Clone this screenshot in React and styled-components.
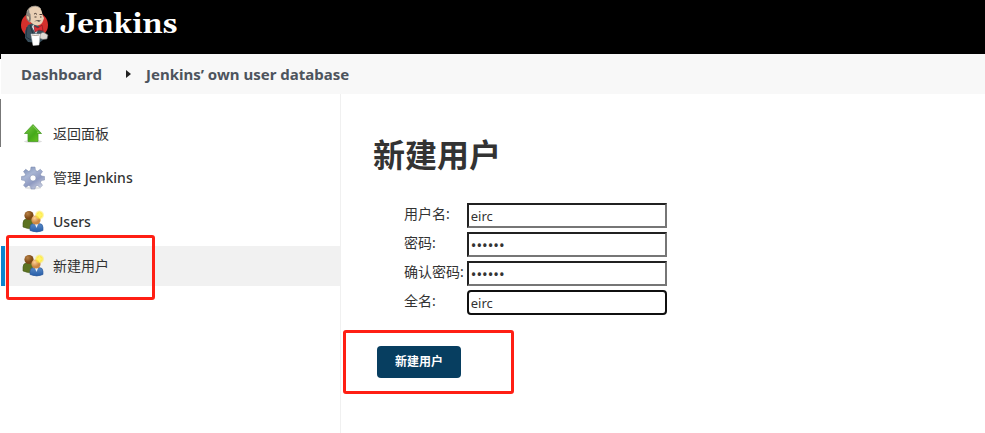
import React from "react";
import styled, { createGlobalStyle } from "styled-components";

const GlobalStyle = createGlobalStyle`
  * { box-sizing: border-box; }
  body {
    margin: 0;
    background: #fff;
    color: #333;
    font-family: "Noto Sans", "Noto Sans CJK SC", sans-serif;
    font-size: 14px;
    line-height: 20px;
  }
`;

const Page = styled.div`
  position: relative;
  display: flex;
  flex-direction: column;
  min-height: 100vh;
  overflow: hidden;
`;

const EdgeMark = styled.span`
  position: absolute;
  left: 0;
  top: ${(p) => p.$top}px;
  width: 1px;
  height: ${(p) => p.$height}px;
  background: ${(p) => p.$color};
`;

const Header = styled.header`
  display: flex;
  align-items: center;
  height: 54px;
  padding: 0 20px;
  background: #000;
`;

const Brand = styled.a`
  display: flex;
  align-items: center;
  gap: 10px;
  padding-bottom: 4px;
  color: #fff;
  font: bold 29px/40px Gelasio, Georgia, "DejaVu Serif", serif;
  text-decoration: none;
`;

const Breadcrumbs = styled.nav`
  display: flex;
  align-items: center;
  height: 40px;
  margin-left: 1px;
  padding: 0 20px;
  background: #f8f8f8;
`;

const Crumb = styled.a`
  color: #4d545d;
  font-size: 15px;
  font-weight: 700;
  text-decoration: none;
  white-space: nowrap;
`;

const Separator = styled.svg`
  width: 5px;
  height: 8px;
  margin: 0 15px 0 24px;
`;

const Body = styled.div`
  display: flex;
  flex: 1;
`;

const SidePanel = styled.aside`
  flex: 0 0 341px;
  padding: 20px 0 0 1px;
  border-right: 1px solid #f0f0f0;
`;

const Tasks = styled.nav`
  display: flex;
  flex-direction: column;
  gap: 4px;
`;

const Task = styled.a`
  position: relative;
  display: flex;
  align-items: center;
  gap: 8px;
  height: 40px;
  padding-left: 16px;
  border-left: 4px solid ${(p) => (p.$active ? "#0b85cf" : "transparent")};
  background: ${(p) => (p.$active ? "#f1f1f1" : "transparent")};
  color: #333;
  text-decoration: none;

  svg { flex: none; }
`;

const TaskLabel = styled.span`
  line-height: 20px;
`;

const Latin = styled.span`
  font-weight: 500;
`;

const Outline = styled.span`
  position: absolute;
  top: ${(p) => p.$top}px;
  left: ${(p) => p.$left}px;
  width: ${(p) => p.$width}px;
  height: ${(p) => p.$height}px;
  border: 3px solid #ff1f14;
  border-radius: 3px;
  pointer-events: none;
`;

const Main = styled.main`
  flex: 1;
  padding: 40px 32px;
`;

const Title = styled.h1`
  margin: 0;
  font-size: 32px;
  font-weight: 700;
  line-height: 42px;
`;

const Form = styled.form`
  margin-top: 25px;
`;

const Fields = styled.div`
  display: grid;
  grid-template-columns: max-content 200px;
  gap: 4px 3px;
  padding: 2px 0 0 31px;
`;

const FieldLabel = styled.label`
  line-height: 22px;
`;

const Input = styled.input`
  width: 100%;
  height: 25px;
  padding: 1px 2px;
  border: 2px inset #767676;
  border-radius: 0;
  background: #fff;
  color: #333;
  font: inherit;
  font-size: ${(p) => (p.type === "password" ? 15 : 13)}px;
  outline: none;

  ${(p) => p.$focused && "border: 2px solid #101010; border-radius: 4px;"}
`;

const Actions = styled.div`
  position: relative;
  width: max-content;
  margin: 31px 0 0 4px;
`;

const Submit = styled.button`
  height: 32px;
  padding: 0 18px;
  border: 0;
  border-radius: 4px;
  background: #073e60;
  color: #fff;
  font: bold 12px/20px "Noto Sans", "Noto Sans CJK SC", sans-serif;
`;

const Mascot = () => (
  <svg width="30" height="44" viewBox="0 0 30 44" aria-hidden="true">
    <ellipse cx="14.500" cy="22" rx="13.500" ry="13" fill="#d5302c" />
    <path d="M5 28 8 22 13 20 20 24 24 29 23 37 19 40 8 39 5 35Z" fill="#3a4f5c" />
    <path d="M7 24 6 34 11 37M10 22l3 9" fill="none" stroke="#1f323e" strokeWidth=".9" />
    <path d="M7 13C6 6 10 3 15 3C20 3 22 7 22.500 12L24 15 23 18C22 22 17 24 13 21L9 18Z" fill="#e9d0b5" />
    <path d="M9 5.500C6 8 5.500 13 7 17L10 20 11 16 10.500 11 9.500 10Z" fill="#8a857f" />
    <path d="M7 15C5 13 8 11.500 9.500 14v4" fill="#e4c7a8" stroke="#77604f" strokeWidth=".6" />
    <path d="M7 9C9 3 17 1 21 6" fill="none" stroke="#9d958b" strokeWidth=".9" />
    <path d="M14 11q2-1.500 3 .5M19.500 11.500h2.500M14.500 14h2M20 14h1.500" fill="none" stroke="#4b3c35" strokeWidth="1" />
    <path d="M14 18.500q3-2.500 7-1l-2 1.500-2-1Z" fill="#5b5550" />
    <path d="M13 21.500 18 27 16 31 12 24Z" fill="#e9edf0" />
    <path d="M14 23 18 25 22 22 23 28 19 27 15 29Z" fill="#e02c35" stroke="#801c25" strokeWidth=".7" />
    <path d="M20 31Q23 28 25 30l3 2-1 4-4 .5-3-1Z" fill="#ddd9d3" stroke="#5a6063" strokeWidth=".6" />
    <path d="M11 31h9l-1 11-6 .500Z" fill="#fff" stroke="#c9c9c9" strokeWidth=".5" />
    <path d="M12 32q3 1 7 0" fill="none" stroke="#897567" strokeWidth=".7" />
  </svg>
);

const UpIcon = () => (
  <svg width="24" height="24" viewBox="0 0 24 24" aria-hidden="true">
    <defs>
      <linearGradient id="green" x2="1" y2="1">
        <stop stopColor="#80cd49" />
        <stop offset=".55" stopColor="#45a91a" />
        <stop offset="1" stopColor="#70ca20" />
      </linearGradient>
    </defs>
    <ellipse cx="12" cy="19.500" rx="9" ry="1.500" fill="#ddd" />
    <path d="M12 2.500 20.500 11.500H17v8H7v-8H3.500Z" fill="url(#green)" stroke="#4b9d29" strokeWidth=".8" strokeLinejoin="round" />
    <path d="M12 4 18 10.500H16" fill="none" stroke="#a5df79" strokeWidth=".6" />
  </svg>
);

const GearIcon = () => (
  <svg width="24" height="24" viewBox="0 0 24 24" aria-hidden="true">
    <defs>
      <linearGradient id="steel" x2=".7" y2="1">
        <stop stopColor="#7287b0" />
        <stop offset=".4" stopColor="#a9b6d4" />
        <stop offset=".7" stopColor="#8f9ac1" />
        <stop offset="1" stopColor="#c9cee0" />
      </linearGradient>
    </defs>
    <ellipse cx="12" cy="22" rx="8" ry="1.500" fill="#e6e6e6" />
    <path
      fillRule="evenodd"
      d="M10 1h4l.5 3.500 2 .8 2.800-2 2.200 2.200-2 2.800.8 1.700 3.200.5v3.500l-3.200.5-.8 2 2 2.700-2.200 2.300-2.800-2-2 .8L14 23h-4l-.5-2.700-2-.8-2.800 2-2.200-2.300 2-2.700-.8-2-3.200-.5v-3.500l3.200-.5.8-1.700-2-2.800 2.200-2.200 2.800 2 2-.8ZM12 9a3 3 0 1 0 0 6a3 3 0 0 0 0-6Z"
      fill="url(#steel)"
      stroke="#7d8aad"
      strokeWidth=".5"
    />
  </svg>
);

const UsersIcon = ({ id }) => (
  <svg width="24" height="24" viewBox="0 0 24 24" aria-hidden="true">
    <defs>
      <radialGradient id={`${id}-glow`}>
        <stop stopColor="#fffcae" />
        <stop offset=".45" stopColor="#ffeb3c" />
        <stop offset="1" stopColor="#ffe431" stopOpacity="0" />
      </radialGradient>
      <radialGradient id={`${id}-brown`} cx=".35" cy=".3">
        <stop stopColor="#b98145" />
        <stop offset="1" stopColor="#7c4915" />
      </radialGradient>
      <radialGradient id={`${id}-skin`} cx=".35" cy=".3">
        <stop stopColor="#ffd196" />
        <stop offset="1" stopColor="#cc8743" />
      </radialGradient>
      <linearGradient id={`${id}-blue`} x2="0" y2="1">
        <stop stopColor="#5b8bc6" />
        <stop offset="1" stopColor="#255ca8" />
      </linearGradient>
    </defs>
    <path d="M2 17v-4q0-4 4-4h4q4 0 4 5v4Q8 20 2 17Z" fill="#5c7321" stroke="#455a18" strokeWidth=".6" />
    <circle cx="8" cy="5.500" r="4.600" fill={`url(#${id}-brown)`} />
    <path d="M9 20.500v-3q0-4 4-4h5q4 0 4 4v3q-6 3-13 0Z" fill={`url(#${id}-blue)`} stroke="#2d599b" strokeWidth=".6" />
    <path d="m13.500 13 2 5 2-5Z" fill="#eef4fb" />
    <circle cx="15" cy="10" r="4.600" fill={`url(#${id}-skin)`} />
    <circle cx="18.500" cy="5" r="5" fill={`url(#${id}-glow)`} />
    <path d="m18.500 1 1 3 3 1-3 1-1 3-1-3-3-1 3-1Z" fill="#fff36b" />
  </svg>
);

const tasks = [
  { id: "back", label: "返回面板", icon: <UpIcon /> },
  { id: "manage", label: <>管理 <Latin>Jenkins</Latin></>, icon: <GearIcon /> },
  { id: "users", label: <Latin>Users</Latin>, icon: <UsersIcon id="users" /> },
  { id: "create", label: "新建用户", icon: <UsersIcon id="create" />, active: true },
];

const fields = [
  { id: "username", label: "用户名:", value: "eirc" },
  { id: "password", label: "密码:", value: "123456", type: "password" },
  { id: "confirm", label: "确认密码:", value: "123456", type: "password" },
  { id: "fullname", label: "全名:", value: "eirc", focused: true },
];

export default function App() {
  return (
    <Page>
      <GlobalStyle />
      <Header>
        <Brand href="#"><Mascot />Jenkins</Brand>
      </Header>
      <Breadcrumbs>
        <Crumb href="#">Dashboard</Crumb>
        <Separator viewBox="0 0 5 8" aria-hidden="true"><path d="M0 0 5 4 0 8Z" fill="#222" /></Separator>
        <Crumb href="#">Jenkins’ own user database</Crumb>
      </Breadcrumbs>
      <Body>
        <SidePanel>
          <Tasks>
            {tasks.map((t) => (
              <Task href="#" key={t.id} $active={t.active}>
                {t.icon}
                <TaskLabel>{t.label}</TaskLabel>
                {t.active && <Outline $top={-11} $left={1} $width={149} $height={65} />}
              </Task>
            ))}
          </Tasks>
        </SidePanel>
        <Main>
          <Title>新建用户</Title>
          <Form onSubmit={(e) => e.preventDefault()}>
            <Fields>
              {fields.map((f) => (
                <React.Fragment key={f.id}>
                  <FieldLabel htmlFor={f.id}>{f.label}</FieldLabel>
                  <Input id={f.id} type={f.type || "text"} defaultValue={f.value} $focused={f.focused} />
                </React.Fragment>
              ))}
            </Fields>
            <Actions>
              <Submit type="submit">新建用户</Submit>
              <Outline $top={-16} $left={-34} $width={171} $height={64} />
            </Actions>
          </Form>
        </Main>
      </Body>
      <EdgeMark $top={54} $height={5} $color="#000" />
      <EdgeMark $top={99} $height={48} $color="#777" />
    </Page>
  );
}
